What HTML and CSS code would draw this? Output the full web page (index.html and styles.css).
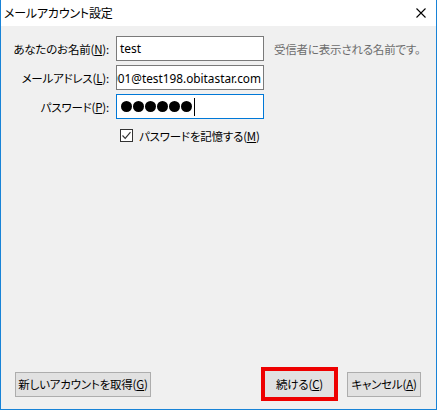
FILE: index.html
```html
<!DOCTYPE html>
<html lang="ja">
<head>
    <meta charset="UTF-8">
    <title>メールアカウント設定</title>
    <link rel="stylesheet" href="styles.css">
</head>
<body>
    <div class="window">
        <div class="titlebar">
            <span class="title">メールアカウント設定</span>
            <svg class="close" width="10" height="10" viewBox="0 0 10 10">
                <path d="M0.5 0.5 L9.5 9.5 M9.5 0.5 L0.5 9.5" stroke="#000" stroke-width="1.1" fill="none"/>
            </svg>
        </div>
        <div class="content">
            <div class="form">
                <label class="label">あなたのお名前(<u>N</u>):</label>
                <div class="field"><span class="value">test</span></div>
                <span class="hint">受信者に表示される名前です。</span>

                <label class="label">メールアドレス(<u>L</u>):</label>
                <div class="field field-scroll"><span class="value">001@test198.obitastar.com</span></div>
                <span></span>

                <label class="label">パスワード(<u>P</u>):</label>
                <div class="field field-focus">
                    <span class="dot"></span><span class="dot"></span><span class="dot"></span>
                    <span class="dot"></span><span class="dot"></span><span class="dot"></span>
                    <span class="caret"></span>
                </div>
                <span></span>

                <span></span>
                <label class="check">
                    <span class="box">
                        <svg width="11" height="11" viewBox="0 0 11 11">
                            <path d="M1.5 5.5 L4.2 8.3 L9.5 2.2" stroke="#333" stroke-width="1.2" fill="none"/>
                        </svg>
                    </span>
                    <span>パスワードを記憶する(<u>M</u>)</span>
                </label>
                <span></span>
            </div>

            <div class="footer">
                <button class="btn btn-wide">新しいアカウントを取得(<u>G</u>)</button>
                <div class="actions">
                    <button class="btn btn-marked">続ける(<u>C</u>)</button>
                    <button class="btn btn-cancel">キャンセル(<u>A</u>)</button>
                </div>
            </div>
        </div>
    </div>
</body>
</html>
```

FILE: styles.css
```css
body {
    margin: 0;
    font-family: "Noto Sans CJK JP", "Noto Sans", sans-serif;
    font-size: 11.5px;
    font-feature-settings: "palt";
    letter-spacing: -0.2px;
    color: #000;
}
.window {
    width: 435px;
    height: 409px;
    border: 1px solid #1883d7;
    border-top: none;
    display: flex;
    flex-direction: column;
    background: #f0f0f0;
}
.titlebar {
    height: 26px;
    background: #fff;
    display: flex;
    align-items: center;
    justify-content: space-between;
    padding: 0 10px 0 3px;
}
.title {
    font-size: 12px;
    margin-top: -1px;
}
.close {
    margin-top: -1px;
}
.content {
    flex: 1;
    display: flex;
    flex-direction: column;
    padding-top: 10px;
}
.form {
    display: grid;
    grid-template-columns: 108px 148px auto;
    grid-auto-rows: 25px;
    column-gap: 7px;
    row-gap: 4px;
    align-items: center;
}
.label {
    text-align: right;
    white-space: nowrap;
}
u {
    text-decoration: underline;
    text-underline-offset: 1px;
}
.field {
    height: 25px;
    box-sizing: border-box;
    background: #fff;
    border: 1px solid #7a7a7a;
    display: flex;
    align-items: center;
    padding: 0 3px;
    overflow: hidden;
    white-space: nowrap;
    font-family: "Noto Sans", sans-serif;
    font-size: 12px;
    letter-spacing: 0;
}
/* long address scrolled to its end, the start is clipped */
.field-scroll {
    justify-content: flex-end;
    padding-right: 2px;
    font-size: 11.8px;
}
.field-focus {
    border-color: #0078d7;
    gap: 1px;
    padding-left: 4px;
}
.dot {
    width: 11px;
    height: 11px;
    border-radius: 50%;
    background: #000;
    flex: none;
}
.caret {
    width: 1px;
    height: 18px;
    background: #000;
    margin-left: 1px;
}
.hint {
    color: #6d6d6d;
    margin-left: 3px;
    white-space: nowrap;
}
.check {
    display: flex;
    align-items: center;
    gap: 6px;
    padding-left: 4px;
    white-space: nowrap;
    grid-column: 2 / 4;
}
.box {
    width: 13px;
    height: 13px;
    box-sizing: border-box;
    border: 1px solid #333;
    background: #fff;
    display: flex;
    align-items: center;
    justify-content: center;
}
.footer {
    margin-top: auto;
    display: flex;
    justify-content: space-between;
    align-items: center;
    padding: 0 15px 12px 14px;
}
.actions {
    display: flex;
    gap: 13px;
    align-items: center;
}
.btn {
    font-family: inherit;
    font-size: 11.5px;
    font-feature-settings: "palt";
    letter-spacing: -0.2px;
    white-space: nowrap;
    height: 25px;
    padding: 0;
    background: #e1e1e1;
    border: 1px solid #adadad;
    color: #000;
}
.btn-wide {
    width: 136px;
}
.btn-cancel {
    width: 74px;
}
.btn-marked {
    width: 69px;
    height: 26px;
    outline: 4px solid #ee0000;
    border-color: #e1e1e1;
}
```
